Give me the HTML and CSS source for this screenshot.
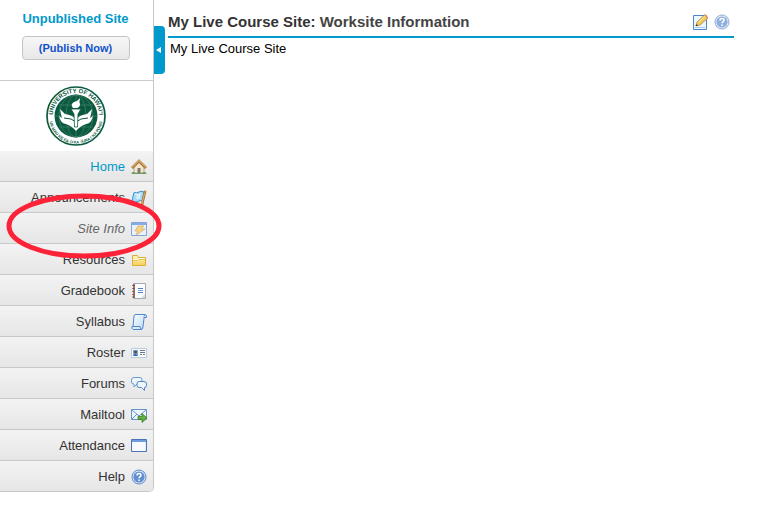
FILE: index.html
```html
<!DOCTYPE html>
<html lang="en">
<head>
<meta charset="utf-8">
<title>My Live Course Site</title>
<link rel="stylesheet" href="styles.css">
</head>
<body>
<svg class="defs" aria-hidden="true">
  <defs>
    <linearGradient id="blue" x1="0" y1="0" x2="1" y2="1"><stop offset="0" stop-color="#fff"/><stop offset="1" stop-color="#b9d8f5"/></linearGradient>
    <linearGradient id="gold" x1="0" y1="0" x2="0" y2="1"><stop offset="0" stop-color="#fff6c4"/><stop offset="1" stop-color="#f6cf58"/></linearGradient>
    <symbol id="help" viewBox="0 0 16 16">
      <circle cx="8" cy="8" r="7" fill="#dce8f8" stroke="#5f8ac6"/>
      <circle cx="8" cy="8" r="5.6" fill="#608fcf"/>
      <path d="M6 6.4C6 3.9 10 4 10 6.3C10 7.7 8.1 7.6 8.1 9.2M8.1 10.6v1.3" fill="none" stroke="#fff" stroke-width="1.5"/>
    </symbol>
  </defs>
</svg>
<div class="page">
  <aside class="sidebar">
    <div class="status">
      <span class="status-label">Unpublished Site</span>
      <button class="publish" type="button">(Publish Now)</button>
    </div>
    <div class="logo">
      <svg viewBox="0 0 60 60" width="60" height="60" role="img" aria-label="University of Hawaiʻi">
        <defs>
          <path id="arc-top" d="M11.500 44A23.200 23.200 0 1 1 48.500 44"/>
          <path id="arc-bottom" d="M3.100 33A27 27 0 0 0 56.900 33"/>
        </defs>
        <circle cx="30" cy="30" r="29" fill="#fff" stroke="#0b5a40" stroke-width="1.700"/>
        <circle cx="30" cy="30" r="21.500" fill="#0b5a40"/>
        <g fill="none" stroke="#4b8772" stroke-width=".6">
          <path d="M30 9v42M9 30h42M13 19h34M13 41h34"/>
          <ellipse cx="30" cy="30" rx="10" ry="21"/><ellipse cx="30" cy="30" rx="17" ry="21"/>
        </g>
        <path d="M14 23l5 5q7 1 11 5q4-4 11-5l5-5q-1 6-2 9l3-2q-2 8-7 8q-6 2-10 7q-4-5-10-7q-5 0-7-8l3 2q-1-3-2-9z" fill="#fff"/>
        <path d="M18 32q8 0 12 4q4-4 12-4" fill="none" stroke="#0b5a40" stroke-width="1"/>
        <path d="M25 23h10l-3 5-.5 13h-3L28 28z" fill="#fff" stroke="#0b5a40" stroke-width=".8"/>
        <path d="M27 22q-3-4 1-6q4-1 6-4q-1 4 0 6q0 3-3 4z" fill="#fff"/>
        <g class="seal-text">
          <text><textPath href="#arc-top" startOffset="50%" text-anchor="middle">UNIVERSITY OF HAWAIʻI</textPath></text>
          <text class="seal-motto"><textPath href="#arc-bottom" startOffset="50%" text-anchor="middle">UA MAU KE EA O KA ʻĀINA I KA PONO</textPath></text>
        </g>
      </svg>
    </div>
    <nav class="menu" aria-label="Site tools">
      <a class="item home" href="#"><span>Home</span>
        <svg viewBox="0 0 16 16"><path d="M3 8l5-5 5 5v6H3z" fill="#f6e6c6" stroke="#b5a58b"/><path d="M1 9l7-7 7 7" fill="none" stroke="#9b6a35" stroke-width="2.6"/><path d="M1 8.6l7-7 7 7" fill="none" stroke="#d9a966" stroke-width="1.400"/><path d="M6.5 9h3v5h-3z" fill="#777a80"/><path d="M0 14.5q2-3 5 0zM11 14.5q2-3 5 0z" fill="#4f9a43"/><path d="M1 14.5h14" stroke="#6f9c61"/></svg></a>
      <a class="item" href="#"><span>Announcements</span>
        <svg viewBox="0 0 16 16"><path d="M3 2.500q3 1 5-.5t5 0l-2 9q-2-1-4 .5t-6-.5z" fill="#a8daf8" stroke="#3a91cf"/><path d="M4 4l3 1-1 4M9 3l-1 6" stroke="#e2f5ff" stroke-width="1.500" fill="none"/><path d="M14 2l-3 13" stroke="#a46f31" stroke-width="2.400"/><path d="M13.800 2l-2.800 12" stroke="#e3b365"/><circle cx="14" cy="2" r="1.4" fill="#c4883a"/></svg></a>
      <a class="item current" href="#" aria-current="page"><span>Site Info</span>
        <svg viewBox="0 0 16 16"><path d="M.5 1.5h15v13H.5z" fill="#e9f2fc" stroke="#85a5d8"/><path d="M1 2h14v2H1z" fill="#85abe4"/><path d="M7 5h6l-3 3h4l-9 6 2-4H4z" fill="#f5d485" stroke="#dcb064" stroke-width=".8"/></svg></a>
      <a class="item" href="#"><span>Resources</span>
        <svg viewBox="0 0 16 16"><path d="M1.5 13.5v-10h5l1 2h7v8z" fill="url(#gold)" stroke="#dfad33"/><path d="M2 7.5h5l1-1h6" fill="none" stroke="#fffbe5"/><path d="M2 8.5h5l1-1h6" fill="none" stroke="#e3b744" stroke-width=".7"/></svg></a>
      <a class="item" href="#"><span>Gradebook</span>
        <svg viewBox="0 0 16 16"><path d="M2.5.5h12v15h-12z" fill="#fafbfe" stroke="#a5a9b3"/><path d="M2 1h2v14H2z" fill="#b06a55"/><path d="M1 2.5h3M1 5.5h3M1 8.5h3M1 11.5h3M1 14h3" stroke="#5e5f68" stroke-width=".8"/><path d="M7 5.500h5M7 9.500h5" stroke="#4d7ed0"/><path d="M7 7.5h5" stroke="#7ca1df"/><path d="M10 15l4-4v4z" fill="#d7dae2"/></svg></a>
      <a class="item" href="#"><span>Syllabus</span>
        <svg viewBox="0 0 16 16"><path d="M3 2q0-1.500 2-1.500h9q-1 1-1 4l-1 8q0 3-2 3H2q-2-1-1-3h1z" fill="url(#blue)" stroke="#4c86cb"/><path d="M14 .5q2 .5 1.400 3h-2.400M1 12.500h8q0 3 2 3" fill="#d9ebfc" stroke="#4c86cb"/></svg></a>
      <a class="item" href="#"><span>Roster</span>
        <svg viewBox="0 0 16 16"><path d="M.5 3.5h15v9H.5z" fill="#f8fcff" stroke="#b7cbdc"/><path d="M2 5h5v6H2z" fill="#75aadf"/><circle cx="4.5" cy="7" r="1.5" fill="#674839"/><path d="M2.5 11q2-4 4 0z" fill="#355e9e"/><path d="M9 5.5h5M9 7.5h5M9 9.5h2M12 9.5h2" stroke="#697b8b"/></svg></a>
      <a class="item" href="#"><span>Forums</span>
        <svg viewBox="0 0 16 16"><path d="M3 1.500h6q2 0 2 2.500v2q0 2-2 2H6l-3 3V8Q.5 8 .5 6V4q0-2.500 2.500-2.500z" fill="#edf5fd" stroke="#6b9bd0"/><path d="M8 5.500h5q2.500 0 2.500 2.500v1.500q0 2-2 2v3l-3-3H8q-2 0-2-2V8q0-2.500 2-2.500z" fill="#edf5fd" stroke="#5588c3"/></svg></a>
      <a class="item" href="#"><span>Mailtool</span>
        <svg viewBox="0 0 16 16"><path d="M.5 2.500h15v10H.5z" fill="#edf6fe" stroke="#6793c6"/><path d="M1 3l7 6 7-6M1 12l5-5M15 12l-5-5" fill="none" stroke="#6793c6"/><path d="M7 9.500h4v-3l5 4.500-5 4.500v-3H7z" fill="#65ae40" stroke="#387f24" stroke-width=".8"/></svg></a>
      <a class="item" href="#"><span>Attendance</span>
        <svg viewBox="0 0 16 16"><path d="M.5 1.500h15v12H.5z" fill="url(#blue)" stroke="#4a73b8"/><path d="M1.500 4h13v9h-13z" fill="#f7fbff"/><path d="M1 2h14v2H1z" fill="#6f9ee0"/></svg></a>
      <a class="item" href="#"><span>Help</span><svg><use href="#help"/></svg></a>
    </nav>
    <svg class="highlight" viewBox="0 0 156 66" aria-hidden="true"><ellipse cx="78" cy="33" rx="75" ry="30"/></svg>
  </aside>
  <button class="toggle" type="button" aria-label="Collapse tools"><svg viewBox="0 0 5 6"><path d="M5 0v6L0 3z"/></svg></button>
  <main class="content">
    <header class="heading">
      <h1>My Live Course Site: <span>Worksite Information</span></h1>
      <div class="actions">
        <a href="#" aria-label="Edit"><svg viewBox="0 0 16 16"><path d="M1.500 1.500h13v14h-13z" fill="#edf6ff" stroke="#4b86cb"/><path d="M3 13.500h10M3 11.500h3" stroke="#abcdec"/><path d="M4 12l1-4 7.500-7L16 4 8 11z" fill="#f4cb58" stroke="#a57a35" stroke-width=".7"/><path d="M6 8.500l7-6" stroke="#fff0a8"/><path d="M12 1l1-1 3 3-1 1.500z" fill="#d79b69"/><path d="M4 12l.5-2 1.500 1.500z" fill="#333"/></svg></a>
        <a class="soft" href="#" aria-label="Help"><svg><use href="#help"/></svg></a>
      </div>
    </header>
    <p>My Live Course Site</p>
  </main>
</div>
</body>
</html>
```
FILE: styles.css
```css
* { box-sizing: border-box; }
body {
  margin: 0;
  background: #fff;
  color: #000;
  font: 13px/16px "Liberation Sans", Arial, sans-serif;
}
.defs { position: absolute; width: 0; height: 0; }
.page { display: flex; align-items: flex-start; }
.sidebar {
  position: relative;
  flex: 0 0 154px;
  border-right: 1px solid #c8c8c8;
  border-bottom: 1px solid #c8c8c8;
  border-bottom-right-radius: 5px;
}
.status {
  display: flex;
  flex-direction: column;
  align-items: center;
  gap: 9px;
  padding: 11px 5px 20px 3px;
  border-bottom: 1px solid #ccc;
}
.status-label { color: #0099cc; font-weight: bold; white-space: nowrap; }
.publish {
  width: 108px;
  height: 24px;
  padding: 0;
  border: 1px solid #c4c4c4;
  border-radius: 4px;
  background: linear-gradient(#f7f7f7, #e8e8e8);
  color: #0f52cc;
  font: bold 11px/14px "Liberation Sans", Arial, sans-serif;
}
.logo { display: flex; justify-content: center; padding: 5px 2px 5px 0; }
.logo svg { display: block; }
.seal-text { fill: #0b5a40; font: bold 6px "Liberation Sans", Arial, sans-serif; }
.seal-motto { font-size: 4px; }
.item {
  display: flex;
  align-items: center;
  justify-content: flex-end;
  gap: 6px;
  height: 31px;
  padding: 2px 6px 0 0;
  border-bottom: 1px solid #c8c8c8;
  background: linear-gradient(#f3f3f3, #e6e6e6);
  color: #333;
  text-decoration: none;
}
.item:last-child { height: 30px; border-bottom: 0; border-bottom-right-radius: 4px; }
.item svg { width: 16px; height: 16px; }
.home { color: #0099cc; }
.current { color: #666; font-style: italic; }
.highlight {
  position: absolute;
  top: 193px;
  left: 6px;
  z-index: 2;
  width: 156px;
  height: 66px;
  pointer-events: none;
}
.highlight ellipse { fill: none; stroke: #fc2237; stroke-width: 5; }
.toggle {
  display: flex;
  align-items: center;
  flex: 0 0 11px;
  height: 48px;
  margin-top: 26px;
  padding: 0 2px;
  border: 0;
  border-radius: 0 4px 4px 0;
  background: #0099cc;
}
.toggle svg { width: 5px; height: 6px; fill: #fff; }
.content { flex: 1; min-width: 0; padding: 14px 24px 0 3px; }
.heading {
  display: flex;
  justify-content: space-between;
  align-items: flex-start;
  height: 24px;
  border-bottom: 2px solid #0099cc;
}
h1 { margin: 0; color: #333; font-size: 15px; line-height: 16px; }
h1 span { color: #444; }
.actions { display: flex; gap: 6px; padding-right: 4px; }
.actions svg { display: block; width: 16px; height: 16px; }
.soft { opacity: 0.7; }
p { margin: 3px 2px; }
```
